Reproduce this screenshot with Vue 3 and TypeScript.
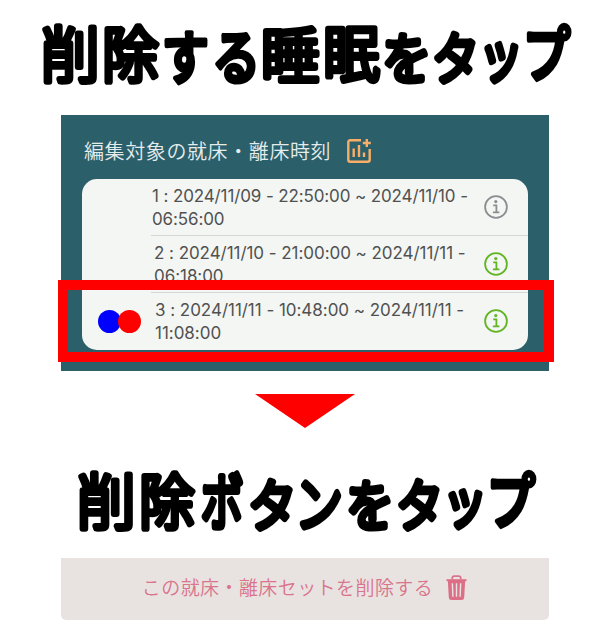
<script setup lang="ts">
interface GlyphBox { char: string; x1: number; x2: number; y1: number; y2: number }
interface PlacedGlyph { char: string; transform: string; kind: string }
interface SleepRow { start: string; end: string; tone: string; marked: boolean; spacing: string }

const STYLES: Record<string, { weight: number; stroke: number }> = {
  kanji: { weight: 300, stroke: 6 },
  kana: { weight: 300, stroke: 6.6 },
  looped: { weight: 500, stroke: 4.2 },
}
const ctx = document.createElement('canvas').getContext('2d')!

// Glyphs with a small counter take a thinner outline so that it stays open.
function kindOf(char: string): string {
  if (char >= '一') return 'kanji'
  return 'するプ'.includes(char) ? 'looped' : 'kana'
}

// Condenses every heading glyph so its ink fills the given box.
function place(glyphs: GlyphBox[]): PlacedGlyph[] {
  return glyphs.map((g) => {
    const kind = kindOf(g.char)
    const { weight, stroke } = STYLES[kind]
    ctx.font = `${weight} 100px "Noto Sans CJK JP", sans-serif`
    const m = ctx.measureText(g.char)
    const left = -m.actualBoundingBoxLeft
    const top = -m.actualBoundingBoxAscent
    const pad = stroke / 2
    const sx = (g.x2 - g.x1 - stroke) / (m.actualBoundingBoxRight - left)
    const sy = (g.y2 - g.y1 - stroke) / (m.actualBoundingBoxDescent - top)
    return {
      char: g.char,
      kind,
      transform: `translate(${g.x1 + pad - left * sx} ${g.y1 + pad - top * sy}) scale(${sx} ${sy})`,
    }
  })
}

const box = (char: string, x1: number, x2: number, y1: number, y2: number): GlyphBox => ({ char, x1, x2, y1, y2 })

const selectHeading = place([
  box('削', 42, 97, 24, 85), box('除', 104, 160, 24, 85), box('す', 164, 208, 30, 85),
  box('る', 215, 256, 33, 85), box('睡', 263, 320, 25, 84), box('眠', 325, 381, 26, 85),
  box('を', 384, 428, 32, 84), box('タ', 434, 476, 31, 85), box('ッ', 484, 519, 41, 84),
  box('プ', 526, 572, 23, 82),
])
const deleteHeading = place([
  box('削', 78, 133, 24, 85), box('除', 141, 196, 24, 85), box('ボ', 201, 244, 24, 84),
  box('タ', 250, 293, 31, 85), box('ン', 299, 342, 32, 83), box('を', 348, 391, 32, 84),
  box('タ', 398, 440, 31, 85), box('ッ', 448, 483, 41, 83), box('プ', 490, 537, 23, 82),
])

const rows: SleepRow[] = [
  { start: '1 : 2024/11/09 - 22:50:00 ~ 2024/11/10 -', end: '06:56:00', tone: 'muted', marked: false, spacing: 'first' },
  { start: '2 : 2024/11/10 - 21:00:00 ~ 2024/11/11 -', end: '06:18:00', tone: 'active', marked: false, spacing: 'second' },
  { start: '3 : 2024/11/11 - 10:48:00 ~ 2024/11/11 -', end: '11:08:00', tone: 'active', marked: true, spacing: 'third' },
]
</script>

<template>
  <main class="guide">
    <svg class="heading" viewBox="0 0 610 115" role="heading" aria-level="1">
      <text v-for="(g, i) in selectHeading" :key="i" :class="g.kind" :transform="g.transform">{{ g.char }}</text>
    </svg>

    <section class="panel">
      <header class="panel-title">
        <span>編集対象の就床・離床時刻</span>
        <svg class="chart-icon" viewBox="0 0 24 24">
          <path d="M14 1.3H3.3Q1.3 1.3 1.3 3.3V20.7Q1.3 22.7 3.3 22.7H20.7Q22.7 22.7 22.7 20.7V10" />
          <path d="M6.7 9.5V18M12 6V18M17 13.5V18M19.8 0V8M15.8 4H23.8" />
        </svg>
      </header>
      <div class="card">
        <div v-for="row in rows" :key="row.start" class="row">
          <div class="markers">
            <template v-if="row.marked"><i class="dot blue"></i><i class="dot red"></i></template>
          </div>
          <div class="detail">
            <div class="times" :class="row.spacing"><div>{{ row.start }}</div><div>{{ row.end }}</div></div>
            <svg class="info" :class="row.tone" viewBox="0 0 24 24">
              <circle class="ring" cx="12" cy="12" r="10.9" />
              <circle class="point" cx="11.8" cy="6.6" r="1.6" />
              <path d="M9.2 10.4H12.4V17M8.9 17.3H15.4" />
            </svg>
          </div>
        </div>
      </div>
      <div class="highlight"></div>
    </section>

    <svg class="arrow" viewBox="0 0 100 34"><path d="M0 0H100L50 34Z" /></svg>

    <svg class="heading second-heading" viewBox="0 0 610 110" role="heading" aria-level="1">
      <text v-for="(g, i) in deleteHeading" :key="i" :class="g.kind" :transform="g.transform">{{ g.char }}</text>
    </svg>

    <button class="delete">
      <span>この就床・離床セットを削除する</span>
      <svg class="trash" viewBox="0 0 21 25">
        <path class="handle" d="M6.3 4.5V3Q6.3 1.2 8.3 1.2H12.7Q14.7 1.2 14.7 3V4.5" />
        <path class="lid" d="M.5 4.2H20.5V6.2H.5Z" />
        <path class="lid" fill-rule="evenodd" d="M1.8 5H19.2L18.2 22.5Q18.1 25 15.7 25H5.3Q2.9 25 2.8 22.5ZM5.6 8.3L6.2 21.8H7.6L7.1 8.3ZM9.8 8.3V21.8H11.2V8.3ZM13.9 8.3L13.4 21.8H14.8L15.4 8.3Z" />
      </svg>
    </button>
  </main>
</template>

<style>
body { margin: 0; background: #fff; }
</style>

<style scoped>
.guide { width: 610px; height: 629px; display: flex; flex-direction: column; align-items: center; overflow: hidden; }
.heading { display: block; flex: none; width: 610px; height: 115px; }
.heading text { font: 300 100px "Noto Sans CJK JP", sans-serif; fill: #000; stroke: #000; stroke-linejoin: round; vector-effect: non-scaling-stroke; }
.heading .kanji { stroke-width: 6px; }
.heading .kana { stroke-width: 6.6px; }
.heading .looped { font-weight: 500; stroke-width: 4.2px; }
.panel { position: relative; flex: none; box-sizing: border-box; width: 488px; height: 256px; padding: 19px 21px 21px; background: #2b606b; }
.panel-title { display: flex; align-items: center; height: 33px; padding-left: 2px; margin-bottom: 12px; gap: 16px; font: 350 20px/33px "Noto Sans CJK JP", sans-serif; letter-spacing: .6px; color: #e4ecec; white-space: nowrap; }
.chart-icon { width: 24px; height: 24px; fill: none; stroke: #f8ae68; stroke-width: 2.4px; }
.card { width: 446px; height: 171px; overflow: hidden; border-radius: 15px; background: #f4f6f4; }
.row { display: flex; height: 57px; }
.markers { display: flex; align-items: center; box-sizing: border-box; width: 69px; padding-left: 16px; }
.dot { width: 23px; height: 23px; border-radius: 50%; }
.dot.blue { background: #00f; }
.dot.red { background: #f00; margin-left: -3px; }
.detail { display: flex; flex: 1; box-sizing: border-box; justify-content: space-between; align-items: center; padding-right: 20px; border-bottom: 1px solid #d5d8d6; }
.row:last-child .detail { border-bottom: 0; padding-bottom: 1px; }
.times { padding: 2px 0 0 1px; font: 400 17px/23.5px Inter, sans-serif; color: #505150; white-space: nowrap; }
.first { letter-spacing: -.12px; }
.second { padding-left: 3px; letter-spacing: -.05px; }
.third { padding-left: 4px; letter-spacing: -.03px; }
.info { width: 24px; height: 24px; fill: none; stroke-width: 1.8px; }
.muted { color: #8c8d91; stroke: currentColor; }
.active { color: #61b522; stroke: currentColor; }
.point { fill: currentColor; stroke: none; }
.highlight { position: absolute; left: -3px; top: 165px; width: 476px; height: 62px; border: 10px solid #f00; }
.arrow { flex: none; width: 100px; height: 34px; margin-top: 23px; }
.arrow path { fill: #f00; }
.second-heading { height: 110px; margin-top: 19px; }
.delete { display: flex; flex: none; align-items: center; justify-content: center; box-sizing: border-box; width: 488px; height: 62px; margin-top: 1px; padding: 0 1px 4px 0; gap: 13px; border: 0; border-radius: 0 0 5px 5px; background: #e8e3e1; color: #da748c; font: 350 19px/30px "Noto Sans CJK JP", sans-serif; letter-spacing: .42px; }
.trash { width: 21px; height: 25px; }
.handle { fill: none; stroke: #da748c; stroke-width: 1.7px; }
.lid { fill: #dc6f87; }
</style>
